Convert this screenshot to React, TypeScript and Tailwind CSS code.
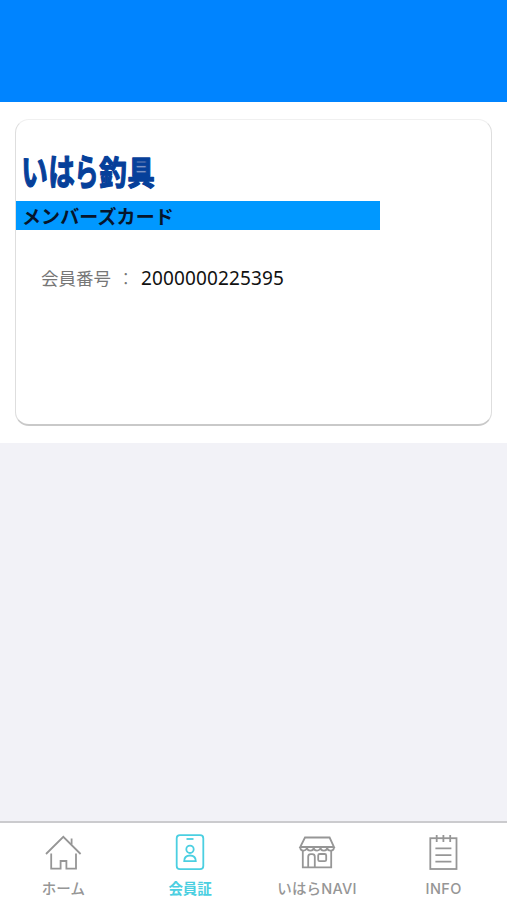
import React, { useState } from 'react';

interface Tab {
  id: string;
  label: string;
  labelStyle: string;
  icon: React.ReactNode;
}

const HomeIcon = () => (
  <>
    <path d="M1 20 18.3 2.8 35.6 20" />
    <path d="M26.6 4.5V10.5" />
    <path d="M6.2 19.5V34.6H15.6V27H21.4V34.6H31V19.5" />
  </>
);

const MemberIcon = () => (
  <>
    <rect x="4.7" y="1.2" width="26.6" height="34" rx="3.2" />
    <path d="M14.5 5H21.5" />
    <circle cx="18" cy="15.3" r="3.7" />
    <path d="M12.2 27.2C12.2 23.4 14.6 21.5 18 21.5S23.8 23.4 23.8 27.2Z" />
  </>
);

const ShopIcon = () => (
  <>
    <path d="M6 3.5H30.6L35 13H1.2Z" />
    <path d="M1.2 13C1.2 17.8 8 17.8 8 13C8 17.8 14.7 17.8 14.7 13C14.7 17.8 21.5 17.8 21.5 13C21.5 17.8 28.2 17.8 28.2 13C28.2 17.8 35 17.8 35 13" />
    <path d="M3.8 17V33.3H32.2V17" />
    <path d="M9.2 33V22.7Q9.2 20.2 11.7 20.2H13.3Q15.8 20.2 15.8 22.7V33" />
    <rect x="19.2" y="20" width="8" height="7.2" rx="1.5" />
  </>
);

const InfoIcon = () => (
  <>
    <rect x="4.3" y="4.2" width="26.2" height="30.8" />
    <path d="M10.7 1V8M17.4 1V8M24.2 1V8" />
    <path d="M9.4 14.3H25.4M9.4 21.2H25.4M9.4 27.6H25.4" />
  </>
);

const tabs: Tab[] = [
  { id: 'home', label: 'ホーム', labelStyle: 'text-[14.5px] font-medium', icon: <HomeIcon /> },
  { id: 'member', label: '会員証', labelStyle: 'text-[14.5px] font-bold', icon: <MemberIcon /> },
  { id: 'navi', label: 'いはらNAVI', labelStyle: 'text-[14.5px] font-medium tracking-[0.2px]', icon: <ShopIcon /> },
  { id: 'info', label: 'INFO', labelStyle: 'text-[14.5px] font-medium tracking-[0.4px]', icon: <InfoIcon /> }
];

// Shop logo: tall, narrow kana followed by slightly wider kanji
const Logo = () => (
  <svg
    viewBox="0 0 140 44"
    className="h-11 w-[140px] overflow-visible font-['Noto_Sans_CJK_JP',sans-serif] font-bold"
    fill="#06409a"
    stroke="#06409a"
    strokeWidth="1.3"
    strokeLinejoin="round"
    textAnchor="middle"
    role="img"
    aria-label="いはら釣具"
  >
    <g fontSize="37">
      <text transform="translate(13.5 37) scale(0.72 1)">い</text>
      <text transform="translate(40.5 37) scale(0.72 1)">は</text>
      <text transform="translate(65.5 37) scale(0.65 1)">ら</text>
    </g>
    <g fontSize="33">
      <text transform="translate(92 36) scale(0.83 1)">釣</text>
      <text transform="translate(120 36) scale(0.84 1)">具</text>
    </g>
  </svg>
);

const MemberCard: React.FC<{ number: string }> = ({ number }) => (
  <section className="h-[341px] bg-white px-[15px] pt-[17px]">
    <div className="h-[307px] rounded-[14px] border border-b-2 border-[#dedede] border-t-[#f0f0f0] border-b-[#c9c9c9] pt-[29px]">
      <h1 className="h-[52px] pl-[5px]">
        <Logo />
      </h1>
      <h2 className="h-[29px] w-[364px] bg-[#0098ff] pl-[6px] text-[19px] leading-[29px] font-bold tracking-[0.1px] text-[#07152b]">
        メンバーズカード
      </h2>
      <dl className="mt-[34px] flex h-7 items-center pl-[25px] text-[17.5px]">
        <dt className="w-[100px] whitespace-nowrap text-[#777]">
          会員番号<span className="ml-[6px] font-light">：</span>
        </dt>
        <dd className="font-['Noto_Sans','Noto_Sans_CJK_JP',sans-serif] text-[19px] tracking-[0.14px] text-[#111]">
          {number}
        </dd>
      </dl>
    </div>
  </section>
);

const App: React.FC = () => {
  const [active, setActive] = useState('member');

  return (
    <div className="flex h-[900px] w-[507px] flex-col overflow-hidden bg-[#f2f2f7] font-['Noto_Sans_CJK_JP',sans-serif]">
      <header className="h-[102px] shrink-0 bg-[#0084ff]" />
      <main className="flex-1">
        <MemberCard number="2000000225395" />
      </main>
      <nav className="grid h-[79px] shrink-0 grid-cols-4 border-t-2 border-[#cbcbce] bg-white font-['Inter','Noto_Sans_CJK_JP',sans-serif]">
        {tabs.map((tab) => (
          <button
            key={tab.id}
            type="button"
            onClick={() => setActive(tab.id)}
            className={`flex flex-col items-center pt-[11px] ${active === tab.id ? 'text-[#4bcfe1]' : 'text-[#969696]'}`}
          >
            <svg
              viewBox="0 0 36 36"
              className="h-9 w-9 shrink-0 overflow-visible"
              fill="none"
              stroke="currentColor"
              strokeWidth="1.8"
            >
              {tab.icon}
            </svg>
            <span className={`mt-[9px] leading-5 whitespace-nowrap ${tab.labelStyle}`}>{tab.label}</span>
          </button>
        ))}
      </nav>
    </div>
  );
};

export default App;
